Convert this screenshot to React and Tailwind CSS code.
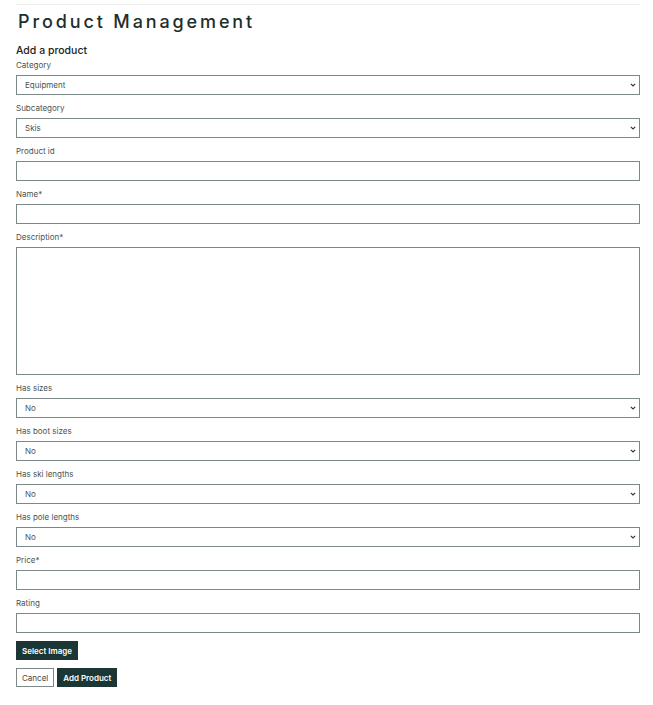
const font = { fontFamily: 'Inter, "Noto Sans", sans-serif' }

function Chevron() {
  return (
    <svg className="pointer-events-none absolute right-[4px] top-1/2 -translate-y-1/2" width="6" height="4" viewBox="0 0 6 4">
      <path d="M0.8 0.8l2.2 2.2 2.2-2.2" fill="none" stroke="#333" strokeWidth="1.1" />
    </svg>
  )
}

function Label({ children }) {
  return <label className="block h-3 leading-3 text-[8px] text-[#4a5252] mb-1">{children}</label>
}

function SelectField({ label, options }) {
  return (
    <div className="mb-[7px]">
      <Label>{label}</Label>
      <div className="relative">
        <select className="block w-full h-5 appearance-none border border-[#7d8888] bg-white pl-2 text-[8px] text-[#4a5252] outline-none">
          {options.map(o => (
            <option key={o}>{o}</option>
          ))}
        </select>
        <Chevron />
      </div>
    </div>
  )
}

function TextField({ label }) {
  return (
    <div className="mb-[7px]">
      <Label>{label}</Label>
      <input className="block w-full h-5 border border-[#7d8888] bg-white px-2 text-[8px] outline-none" />
    </div>
  )
}

export default function App() {
  return (
    <div className="min-h-[705px] bg-white pl-4 pr-[13px] text-[#1f2b2b]" style={font}>
      <div className="pt-1">
        <div className="border-t border-[#efefef]" />
      </div>
      <h1 className="mt-[5px] pl-[2px] h-6 leading-6 text-[18px] font-medium tracking-[0.16em] text-[#1d2e2e]">Product Management</h1>
      <h2 className="mt-[9px] h-4 leading-4 text-[10.5px] font-medium text-[#222]">Add a product</h2>

      <div>
        <SelectField label="Category" options={['Equipment', 'Clothing', 'Accessories']} />
        <SelectField label="Subcategory" options={['Skis', 'Boots', 'Poles']} />
        <TextField label="Product id" />
        <TextField label="Name*" />
        <div className="mb-[7px]">
          <Label>Description*</Label>
          <textarea className="block w-full h-32 resize-none border border-[#7d8888] bg-white p-2 text-[8px] outline-none" />
        </div>
        <SelectField label="Has sizes" options={['No', 'Yes']} />
        <SelectField label="Has boot sizes" options={['No', 'Yes']} />
        <SelectField label="Has ski lengths" options={['No', 'Yes']} />
        <SelectField label="Has pole lengths" options={['No', 'Yes']} />
        <TextField label="Price*" />
        <div>
          <Label>Rating</Label>
          <input className="block w-full h-5 border border-[#7d8888] bg-white px-2 text-[8px] outline-none" />
        </div>
      </div>

      <button type="button" className="mt-2 block h-[19px] px-[5px] bg-[#1b3635] border border-[#1b3635] text-white text-[8px] font-semibold">
        Select Image
      </button>
      <div className="mt-2 flex gap-[3px]">
        <button type="button" className="h-[19px] px-[5px] bg-white border border-[#7d8888] text-[#444] text-[8px]">
          Cancel
        </button>
        <button type="button" className="h-[19px] px-[5px] bg-[#1b3635] border border-[#1b3635] text-white text-[8px] font-semibold">
          Add Product
        </button>
      </div>
    </div>
  )
}
